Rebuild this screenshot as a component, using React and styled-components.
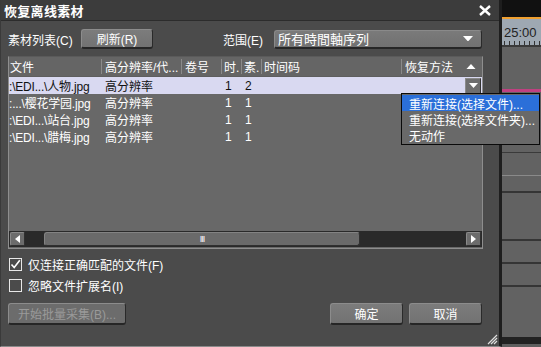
import React from 'react';
import styled, { createGlobalStyle } from 'styled-components';

const GlobalStyle = createGlobalStyle`
  html, body {
    margin: 0;
    padding: 0;
    background: #4b4b4b;
  }
  body {
    font-family: "Liberation Sans", "Noto Sans CJK SC", sans-serif;
    font-size: 12px;
    color: #ffffff;
  }
`;

const Screen = styled.div`
  position: relative;
  display: flex;
  width: 541px;
  height: 347px;
  overflow: hidden;
`;

const Dialog = styled.div`
  display: flex;
  flex-direction: column;
  width: 498px;
  height: 346px;
  background: #4b4b4b;
  border-left: 1px solid #3a3a3a;
  border-right: 3px solid #1e1e1e;
  border-bottom: 1px solid #8a8a8a;
  position: relative;
`;

const TitleBar = styled.div`
  display: flex;
  align-items: center;
  justify-content: space-between;
  height: 20px;
  padding: 0 8px 0 3px;
  background: #3c3c3c;
  border-bottom: 1px solid #2c2c2c;
`;

const Title = styled.span`
  font-family: "Noto Sans CJK SC", sans-serif;
  font-size: 13px;
  font-weight: bold;
  letter-spacing: 0.3px;
`;

const Body = styled.div`
  display: flex;
  flex-direction: column;
  padding: 8px 17px 0 7px;
`;

const Toolbar = styled.div`
  display: flex;
  align-items: center;
  height: 20px;
`;

const Label = styled.span`
  white-space: nowrap;
  width: ${p => p.$width || 'auto'};
`;

const Button = styled.button`
  display: flex;
  align-items: center;
  justify-content: center;
  width: ${p => p.$width};
  height: ${p => p.$height || '20px'};
  margin-left: ${p => p.$ml || '0'};
  padding: 0;
  font-family: "Liberation Sans", "Noto Sans CJK SC", sans-serif;
  font-size: 12px;
  color: ${p => (p.disabled ? '#9a9a9a' : '#ffffff')};
  background: ${p => (p.disabled ? '#6c6c6c' : 'linear-gradient(#7c7c7c, #727272)')};
  border: 1px solid #8c8c8c;
  border-right-color: #2a2a2a;
  border-bottom: 2px solid #262626;
  border-radius: 3px;
`;

const Select = styled.div`
  display: flex;
  align-items: center;
  justify-content: space-between;
  width: 208px;
  height: 19px;
  box-sizing: border-box;
  margin-left: auto;
  padding: 0 8px 0 3px;
  background: linear-gradient(#7a7a7a, #717171);
  border: 1px solid #8a8a8a;
  border-bottom: 2px solid #262626;
  border-right-color: #2a2a2a;
  border-radius: 3px;
  font-size: 13px;
`;

const TableFrame = styled.div`
  display: flex;
  flex-direction: column;
  margin-top: 7px;
  width: 475px;
  height: 193px;
  box-sizing: border-box;
  background: #686868;
  border: 1px solid #8e8e8e;
  border-top-color: #5a5a5a;
`;

const columns = '92px 80px 40px 20px 20px 140px 1fr';

const HeaderRow = styled.div`
  display: grid;
  grid-template-columns: ${columns};
  height: 19px;
  align-items: center;
  background: #656565;
  border-bottom: 1px solid #5e5e5e;
`;

const HeaderCell = styled.div`
  display: flex;
  align-items: center;
  height: 15px;
  padding-left: ${p => p.$pad || '3px'};
  border-left: ${p => (p.$first ? 'none' : '1px solid #8a8a8a')};
  white-space: nowrap;
  overflow: hidden;
  font-size: 12px;
  justify-content: ${p => (p.$spread ? 'space-between' : 'flex-start')};
  padding-right: ${p => (p.$spread ? '6px' : '0')};
`;

const Row = styled.div`
  display: grid;
  grid-template-columns: ${columns};
  height: 17px;
  align-items: center;
  background: ${p => (p.$selected ? '#d9d9f1' : 'transparent')};
  color: ${p => (p.$selected ? '#111111' : '#ffffff')};
`;

const Cell = styled.div`
  padding-left: ${p => p.$pad || '4px'};
  white-space: nowrap;
  overflow: hidden;
  font-size: 12px;
  display: flex;
  align-items: center;
  justify-content: ${p => (p.$end ? 'flex-end' : 'flex-start')};
  padding-right: ${p => (p.$end ? '1px' : '0')};
`;

const FileName = styled.span`
  font-size: 12px;
  letter-spacing: -0.2px;
`;

const RowButton = styled.div`
  display: flex;
  align-items: center;
  justify-content: center;
  width: 14px;
  height: 14px;
  background: #6e6e6e;
  border: 1px solid #8a8a8a;
  border-right-color: #333;
  border-bottom-color: #333;
`;

const Spacer = styled.div`
  flex: 1;
`;

const HScroll = styled.div`
  display: flex;
  align-items: center;
  height: 16px;
  margin: 0 0 1px 0;
  background: #2a2a2a;
  padding: 0 1px;
`;

const ScrollArrow = styled.div`
  display: flex;
  align-items: center;
  justify-content: center;
  width: 13px;
  height: 12px;
  margin-left: ${p => p.$ml || '0'};
  background: #6c6c6c;
  border: 1px solid #8a8a8a;
  border-right-color: #303030;
  border-bottom-color: #303030;
  border-radius: 2px;
`;

const ScrollThumb = styled.div`
  display: flex;
  align-items: center;
  justify-content: center;
  width: 314px;
  height: 12px;
  margin-left: 19px;
  background: #6a6a6a;
  border: 1px solid #838383;
  border-right-color: #303030;
  border-bottom-color: #303030;
  border-radius: 3px;
  font-size: 9px;
  letter-spacing: -1px;
  color: #ffffff;
`;

const CheckRow = styled.label`
  display: flex;
  align-items: center;
  height: 21px;
  margin-top: ${p => p.$mt || '0'};
  padding-left: 1px;
  font-size: 12px;
`;

const Box = styled.span`
  display: flex;
  align-items: center;
  justify-content: center;
  width: 11px;
  height: 11px;
  margin-right: 6px;
  border: 1px solid #e8e8e8;
`;

const Footer = styled.div`
  display: flex;
  align-items: center;
  margin-top: 7px;
`;

const Grip = styled.svg`
  position: absolute;
  right: 1px;
  bottom: 1px;
`;

const Backdrop = styled.div`
  flex: 1;
  display: flex;
  flex-direction: column;
  background: #5f5f5f;
`;

const BackTop = styled.div`
  height: 17px;
  background: #111111;
  border-bottom: 2px solid #f0a030;
`;

const Ruler = styled.div`
  height: 26px;
  display: flex;
  flex-direction: column;
  justify-content: flex-end;
  background: #9ea8b2;
  color: #222;
  font-size: 13px;
  padding-left: 2px;
  border-bottom: 2px solid #3a3a3a;
`;

const Ticks = styled.div`
  height: 4px;
  margin-top: 1px;
  background: repeating-linear-gradient(90deg, #333 0 1px, transparent 1px 5px);
`;

const Track = styled.div`
  height: ${p => p.$h};
  background: ${p => p.$bg || '#626262'};
  border-bottom: ${p => p.$line || '2px solid #353535'};
`;

const Menu = styled.div`
  position: absolute;
  left: 401px;
  top: 93px;
  width: 137px;
  padding: 1px 0;
  background: #696969;
  border: 1px solid #0a0a0a;
  display: flex;
  flex-direction: column;
`;

const MenuItem = styled.div`
  height: 16px;
  display: flex;
  align-items: center;
  padding-left: 7px;
  font-size: 12px;
  white-space: nowrap;
  background: ${p => (p.$active ? '#2b6fd9' : 'transparent')};
`;

const Tri = ({ dir = 'down', size = 10 }) => {
  const pts = {
    down: `0,0 ${size},0 ${size / 2},${size * 0.55}`,
    up: `0,${size * 0.55} ${size},${size * 0.55} ${size / 2},0`,
  };
  return (
    <svg width={size} height={size * 0.55}>
      <polygon points={pts[dir]} fill="#ffffff" />
    </svg>
  );
};

const SideTri = ({ dir }) => (
  <svg width="5" height="8">
    <polygon points={dir === 'left' ? '5,0 5,8 0,4' : '0,0 0,8 5,4'} fill="#ffffff" />
  </svg>
);

const rows = [
  { file: ':\\EDI...\\人物.jpg', res: '高分辨率', t: '1', s: '2', selected: true },
  { file: ':...\\樱花学园.jpg', res: '高分辨率', t: '1', s: '1' },
  { file: ':\\EDI...\\站台.jpg', res: '高分辨率', t: '1', s: '1' },
  { file: ':\\EDI...\\腊梅.jpg', res: '高分辨率', t: '1', s: '1' },
];

const App = () => (
  <Screen>
    <GlobalStyle />
    <Dialog>
      <TitleBar>
        <Title>恢复离线素材</Title>
        <svg width="12" height="11">
          <path d="M1 1 L11 10 M11 1 L1 10" stroke="#ffffff" strokeWidth="2.4" />
        </svg>
      </TitleBar>
      <Body>
        <Toolbar>
          <Label $width="73px">素材列表(C)</Label>
          <Button $width="72px">刷新(R)</Button>
          <Label style={{ marginLeft: 70 }}>范围(E)</Label>
          <Select>
            <span>所有時間軸序列</span>
            <Tri />
          </Select>
        </Toolbar>

        <TableFrame>
          <HeaderRow>
            <HeaderCell $first $pad="1px">文件</HeaderCell>
            <HeaderCell>高分辨率/代...</HeaderCell>
            <HeaderCell>卷号</HeaderCell>
            <HeaderCell $pad="2px">时.</HeaderCell>
            <HeaderCell $pad="2px">素.</HeaderCell>
            <HeaderCell $pad="2px">时间码</HeaderCell>
            <HeaderCell $spread>
              <span>恢复方法</span>
              <Tri dir="up" />
            </HeaderCell>
          </HeaderRow>
          {rows.map(r => (
            <Row key={r.file} $selected={r.selected}>
              <Cell $pad="0px"><FileName>{r.file}</FileName></Cell>
              <Cell>{r.res}</Cell>
              <Cell />
              <Cell $pad="4px">{r.t}</Cell>
              <Cell $pad="4px">{r.s}</Cell>
              <Cell />
              <Cell $end>
                {r.selected && (
                  <RowButton>
                    <Tri size={9} />
                  </RowButton>
                )}
              </Cell>
            </Row>
          ))}
          <Spacer />
          <HScroll>
            <ScrollArrow><SideTri dir="left" /></ScrollArrow>
            <ScrollThumb>III</ScrollThumb>
            <ScrollArrow $ml="auto"><SideTri dir="right" /></ScrollArrow>
          </HScroll>
        </TableFrame>

        <CheckRow $mt="5px">
          <Box>
            <svg width="11" height="11">
              <path d="M1.5 5.5 L4.2 8.5 L9.8 1.2" stroke="#ffffff" strokeWidth="1.6" fill="none" />
            </svg>
          </Box>
          仅连接正确匹配的文件(F)
        </CheckRow>
        <CheckRow>
          <Box />
          忽略文件扩展名(I)
        </CheckRow>

        <Footer>
          <Button $width="118px" $height="22px" disabled>开始批量采集(B)...</Button>
          <Button $width="73px" $height="22px" $ml="auto">确定</Button>
          <Button $width="73px" $height="22px" $ml="6px">取消</Button>
        </Footer>
      </Body>
      <Grip width="12" height="12">
        <path d="M11 2 L2 11 M11 5 L5 11 M11 8 L8 11" stroke="#e0e0e0" strokeWidth="1.2" />
      </Grip>
    </Dialog>

    <Backdrop>
      <BackTop />
      <Ruler>
        <span>25:00</span>
        <Ticks />
      </Ruler>
      <Track $h="42px" $line="3px solid #c04080" />
      <Track $h="60px" $line="1px solid #3a3a3a" />
      <Track $h="22px" $line="1px solid #8a8a8a" />
      <Track $h="15px" $line="2px solid #353535" />
      <Track $h="46px" $line="2px solid #353535" />
      <Track $h="21px" $line="2px solid #353535" />
      <Track $h="21px" $line="2px solid #353535" />
      <Track $h="50px" $line="none" />
      <Track $h="7px" $bg="#222" $line="none" />
    </Backdrop>

    <Menu>
      <MenuItem $active>重新连接(选择文件)...</MenuItem>
      <MenuItem>重新连接(选择文件夹)...</MenuItem>
      <MenuItem>无动作</MenuItem>
    </Menu>
  </Screen>
);

export default App;
